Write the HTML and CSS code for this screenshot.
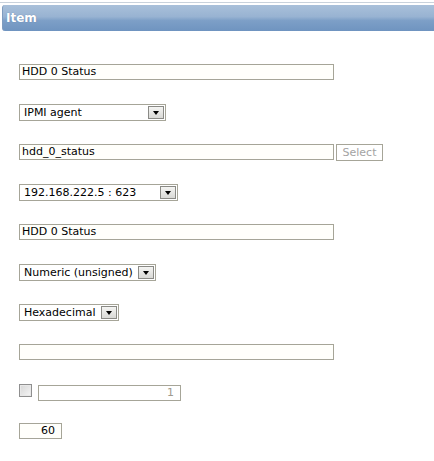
FILE: index.html
```html
<!DOCTYPE html>
<html>
<head>
<meta charset="utf-8">
<link rel="stylesheet" href="styles.css">
</head>
<body>
<div class="topline"></div>
<div class="header"><span class="title">Item</span></div>
<div class="form">
  <div class="row"><div class="field w314">HDD 0 Status</div></div>
  <div class="row"><div class="select w146"><span class="val">IPMI agent</span><span class="arrow"></span></div></div>
  <div class="row"><div class="field w314">hdd_0_status</div><div class="btn">Select</div></div>
  <div class="row"><div class="select w158"><span class="val">192.168.222.5 : 623</span><span class="arrow"></span></div></div>
  <div class="row"><div class="field w314">HDD 0 Status</div></div>
  <div class="row"><div class="select w136"><span class="val">Numeric (unsigned)</span><span class="arrow"></span></div></div>
  <div class="row"><div class="select w99"><span class="val">Hexadecimal</span><span class="arrow"></span></div></div>
  <div class="row"><div class="field w314"></div></div>
  <div class="row"><div class="check"></div><div class="field w142 right disabled">1</div></div>
  <div class="row"><div class="field w42 right">60</div></div>
</div>
</body>
</html>
```
FILE: styles.css
```css
html, body {
  margin: 0;
  padding: 0;
  background: #ffffff;
  font-family: "DejaVu Sans", Verdana, sans-serif;
  font-size: 11px;
  color: #000;
}
.topline {
  margin-top: 2px;
  height: 1px;
  background: #c9d2dc;
}
.header {
  margin: 2px 0 0 2px;
  height: 26px;
  border-radius: 3px 0 0 3px;
  background: linear-gradient(to bottom, #a9c0da 0%, #98b3d2 45%, #7d9fc7 60%, #6f94c0 100%);
  display: flex;
  align-items: center;
  padding-left: 3px;
  border-left: 1px solid #7f9cbf;
}
.title {
  color: #ffffff;
  font-weight: bold;
  font-size: 12px;
  text-shadow: 0 0 1px #5a7aa3;
}
.form {
  padding: 33px 0 0 19px;
}
.row {
  height: 16px;
  margin-bottom: 24px;
  display: flex;
  align-items: flex-start;
}
.row:nth-child(8), .row:nth-child(10) { margin-top: 1px; }
.row:nth-child(9) { margin-bottom: 23px; }
.field {
  box-sizing: border-box;
  height: 16px;
  border: 1px solid #a6a598;
  background: #fffffb;
  padding: 0 2px;
  line-height: 14px;
  white-space: nowrap;
  overflow: hidden;
}
.right { text-align: right; padding-right: 6px; }
.disabled { color: #a09a8e; background: #ffffff; margin-top: 1px; }
.w314 { width: 315px; }
.w142 { width: 143px; }
.w42 { width: 43px; }
.select {
  box-sizing: border-box;
  height: 17px;
  border: 1px solid #a6a598;
  background: #ffffff;
  display: flex;
  align-items: center;
  justify-content: space-between;
  padding: 0 1px 0 4px;
  line-height: 15px;
  white-space: nowrap;
}
.w146 { width: 147px; }
.w158 { width: 159px; }
.w136 { width: 137px; }
.w99 { width: 100px; }
.arrow {
  box-sizing: border-box;
  width: 16px;
  height: 13px;
  border: 1px solid #8a8a86;
  background: linear-gradient(to bottom, #f4f4f2, #d9d9d6);
  position: relative;
  flex: none;
  margin-left: 3px;
}
.arrow::after {
  content: "";
  position: absolute;
  left: 4px;
  top: 4px;
  border-left: 3px solid transparent;
  border-right: 3px solid transparent;
  border-top: 4px solid #000;
}
.btn {
  box-sizing: border-box;
  margin-left: 2px;
  width: 47px;
  height: 17px;
  border: 1px solid #a6a598;
  background: #ffffff;
  color: #a3a3a3;
  text-align: center;
  line-height: 15px;
}
.check {
  box-sizing: border-box;
  width: 13px;
  height: 13px;
  border: 1px solid #8f8f8f;
  background: linear-gradient(135deg, #d6d6d6, #f6f6f6);
  box-shadow: inset 0 0 0 1px #e8e8e8;
  margin-right: 6px;
}
```
